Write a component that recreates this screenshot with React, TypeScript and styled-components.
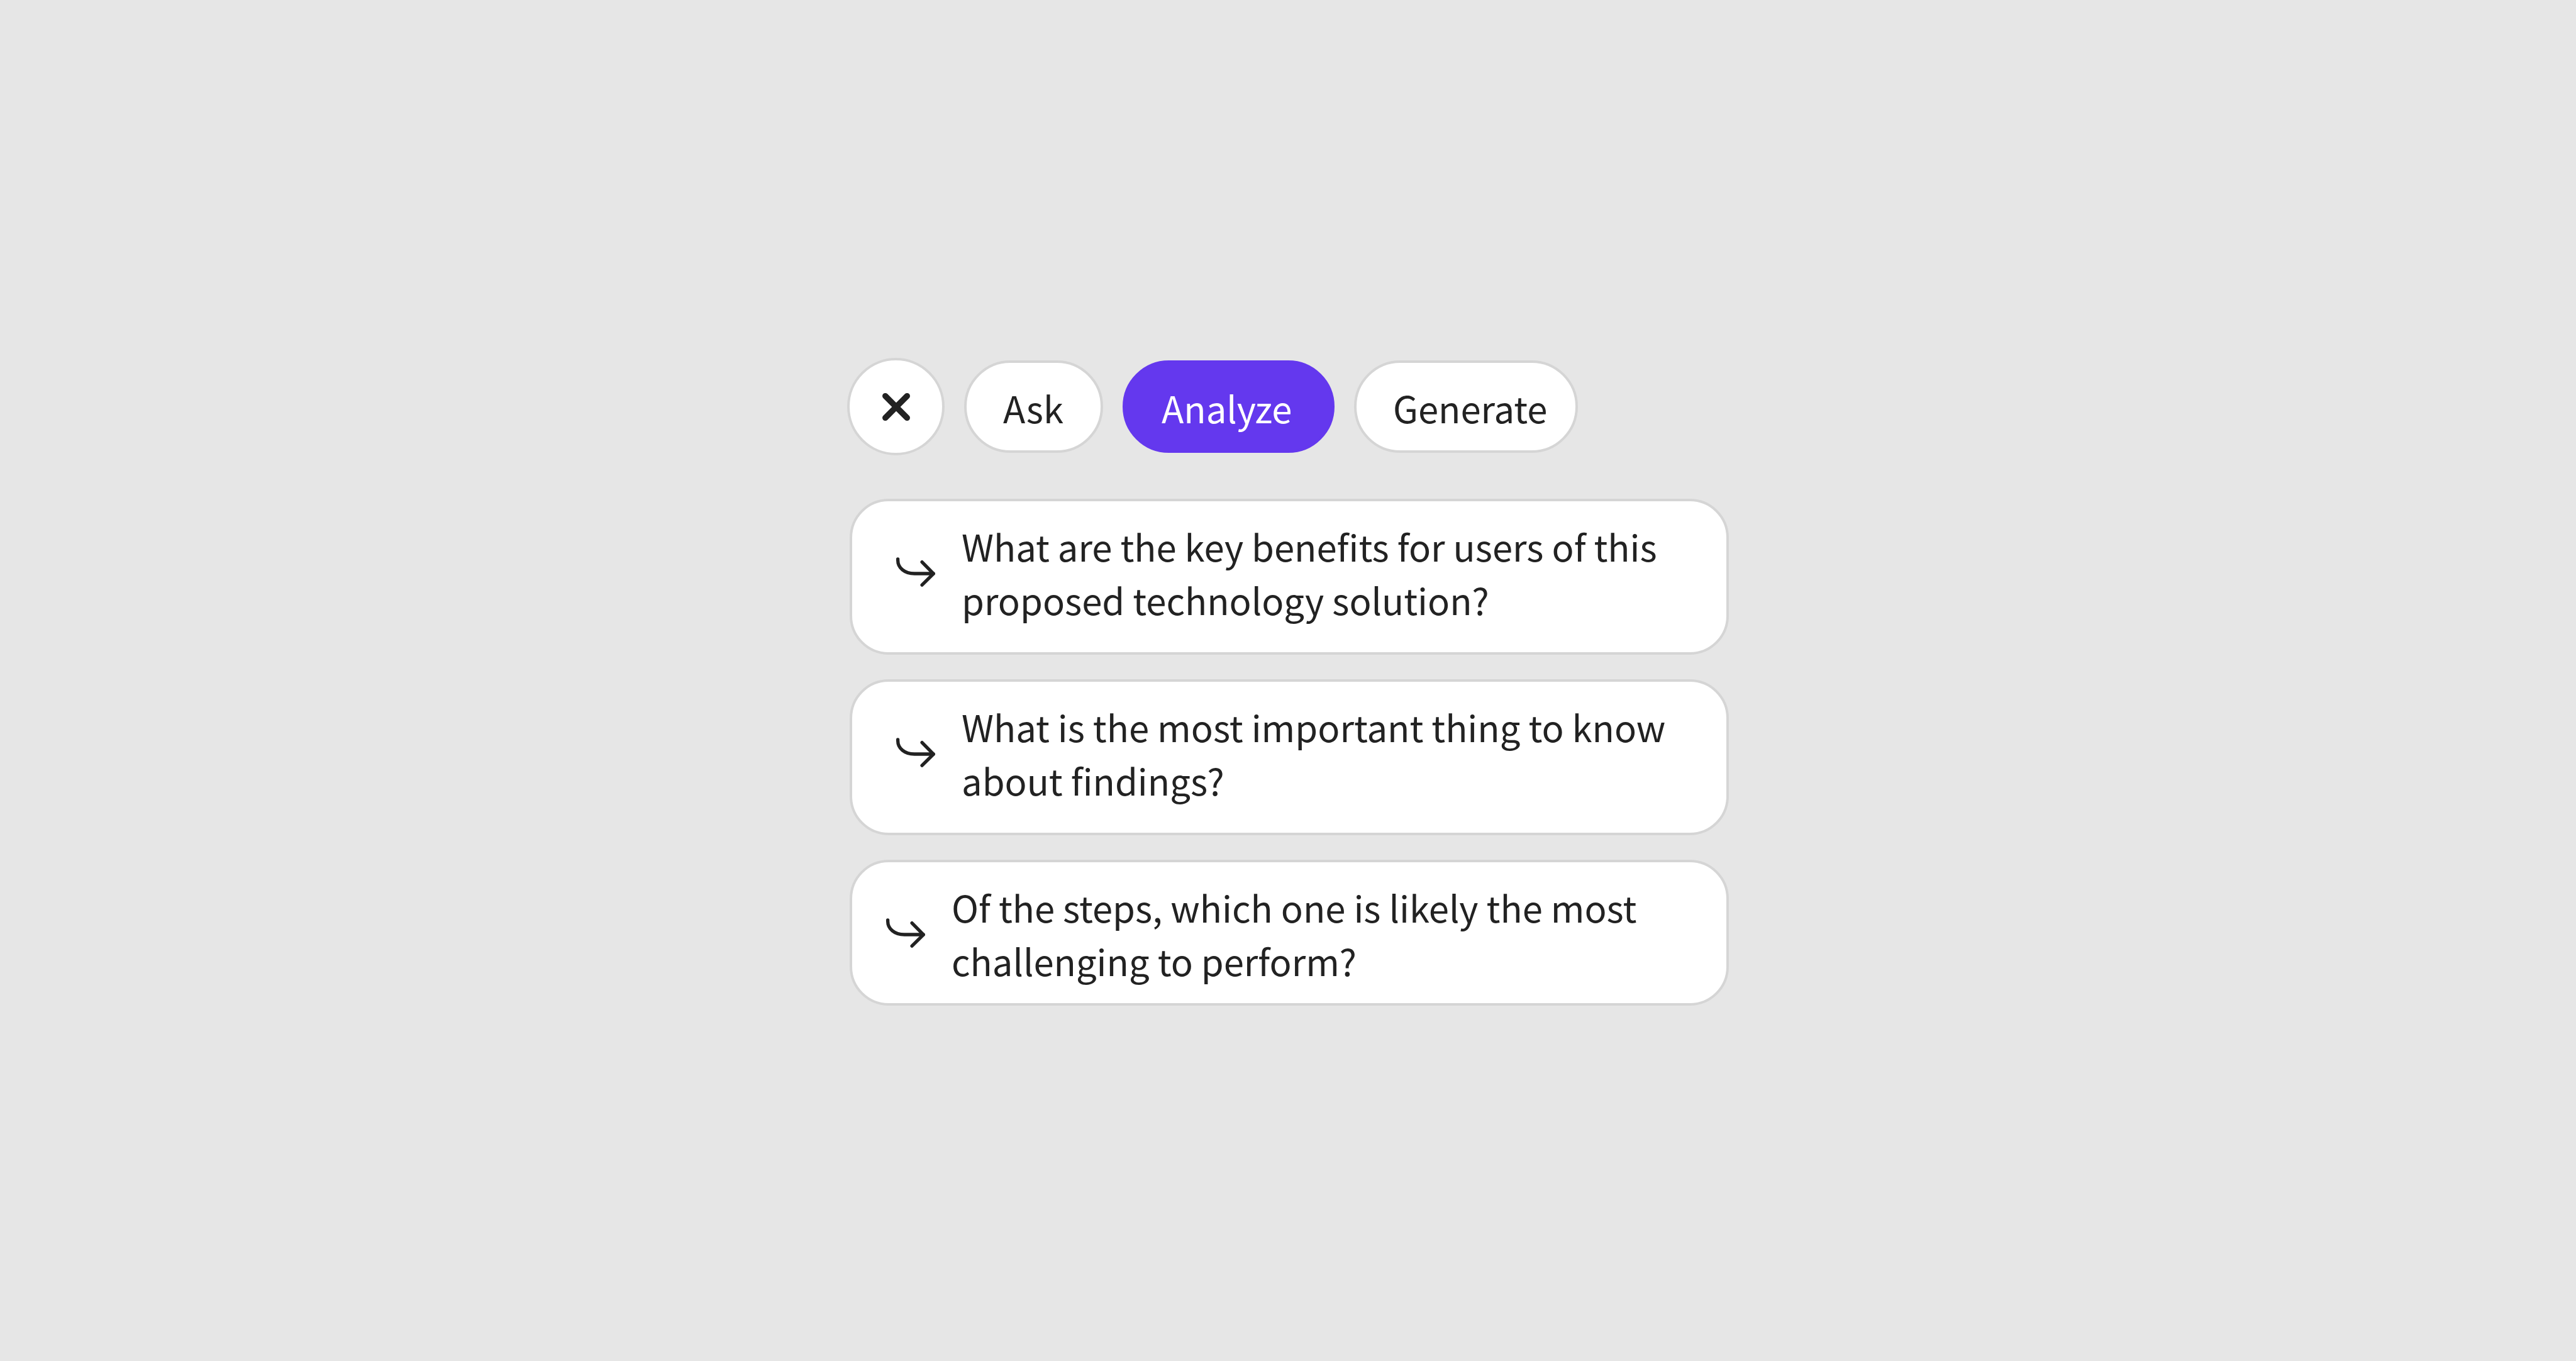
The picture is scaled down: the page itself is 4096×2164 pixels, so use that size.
import React, { useState } from 'react';
import styled, { createGlobalStyle } from 'styled-components';

const GlobalStyle = createGlobalStyle`
  *, *::before, *::after {
    box-sizing: border-box;
  }

  body {
    margin: 0;
    background: #e6e6e6;
    color: #222222;
    font-family: 'Noto Sans CJK JP', 'Noto Sans', sans-serif;
  }
`;

const Page = styled.main`
  display: flex;
  flex-direction: column;
  align-items: center;
  justify-content: center;
  min-height: 100vh;
  padding-top: 4px;
`;

const Assistant = styled.section`
  display: flex;
  flex-direction: column;
  gap: 69px;
  width: 100%;
  max-width: 1402px;
`;

const Toolbar = styled.div`
  display: flex;
  align-items: center;
  gap: 31px;
`;

const CloseButton = styled.button`
  display: flex;
  align-items: center;
  justify-content: center;
  width: 155px;
  height: 155px;
  padding: 0;
  border: 4px solid #d5d5d5;
  border-radius: 50%;
  background: #ffffff;
  color: inherit;
  cursor: pointer;
`;

const Pill = styled.button<{ $selected: boolean; $width: number }>`
  min-width: ${(p) => p.$width}px;
  height: 147px;
  padding: 3px 0 0 58px;
  border: 4px solid ${(p) => (p.$selected ? '#6438ee' : '#d5d5d5')};
  border-radius: 74px;
  background: ${(p) => (p.$selected ? '#6438ee' : '#ffffff')};
  color: ${(p) => (p.$selected ? '#ffffff' : 'inherit')};
  font-family: inherit;
  font-size: 58px;
  line-height: 85px;
  text-align: left;
  cursor: pointer;
`;

const PromptList = styled.ul`
  display: flex;
  flex-direction: column;
  gap: 39px;
  margin: 0;
  padding: 0 0 0 4px;
  list-style: none;
`;

const PromptCard = styled.button<{ $compact: boolean }>`
  display: flex;
  align-items: flex-start;
  gap: 42px;
  width: 100%;
  padding: ${(p) => (p.$compact ? '29px 70px 25px 54px' : '29px 70px 41px 70px')};
  border: 4px solid #d5d5d5;
  border-radius: 62px;
  background: #ffffff;
  color: inherit;
  font-family: inherit;
  font-size: 58px;
  line-height: 85px;
  text-align: left;
  cursor: pointer;
`;

const ArrowGlyph = styled.svg`
  flex: none;
  width: 62px;
  height: 47px;
  margin-top: 60px;
  overflow: visible;
`;

const CloseGlyph = styled.svg`
  width: 44px;
  height: 44px;
`;

function ArrowIcon() {
  return (
    <ArrowGlyph
      viewBox="0 0 64 48"
      fill="none"
      stroke="currentColor"
      strokeWidth="5.5"
      strokeLinecap="round"
      strokeLinejoin="round"
      aria-hidden="true"
    >
      <path d="M2.7 2.7V4.6C2.7 17 13.6 26.6 30 26.6H61" />
      <path d="M42.4 7.6L61.2 26.6L42.4 45.3" />
    </ArrowGlyph>
  );
}

const TABS = [
  { label: 'Ask', width: 221 },
  { label: 'Analyze', width: 337 },
  { label: 'Generate', width: 356 },
];

const PROMPTS = [
  { text: 'What are the key benefits for users of this proposed technology solution?', compact: false },
  { text: 'What is the most important thing to know about findings?', compact: false },
  { text: 'Of the steps, which one is likely the most challenging to perform?', compact: true },
];

export default function App() {
  const [active, setActive] = useState('Analyze');

  return (
    <>
      <GlobalStyle />
      <Page>
        <Assistant>
          <Toolbar>
            <CloseButton type="button" aria-label="Close">
              <CloseGlyph
                viewBox="0 0 45 45"
                fill="none"
                stroke="currentColor"
                strokeWidth="9.6"
                strokeLinecap="round"
                aria-hidden="true"
              >
                <path d="M4.8 4.8L40.2 40.2M40.2 4.8L4.8 40.2" />
              </CloseGlyph>
            </CloseButton>
            {TABS.map((tab) => (
              <Pill
                key={tab.label}
                type="button"
                $selected={tab.label === active}
                $width={tab.width}
                aria-pressed={tab.label === active}
                onClick={() => setActive(tab.label)}
              >
                {tab.label}
              </Pill>
            ))}
          </Toolbar>
          <PromptList>
            {PROMPTS.map((prompt) => (
              <li key={prompt.text}>
                <PromptCard type="button" $compact={prompt.compact}>
                  <ArrowIcon />
                  <span>{prompt.text}</span>
                </PromptCard>
              </li>
            ))}
          </PromptList>
        </Assistant>
      </Page>
    </>
  );
}
